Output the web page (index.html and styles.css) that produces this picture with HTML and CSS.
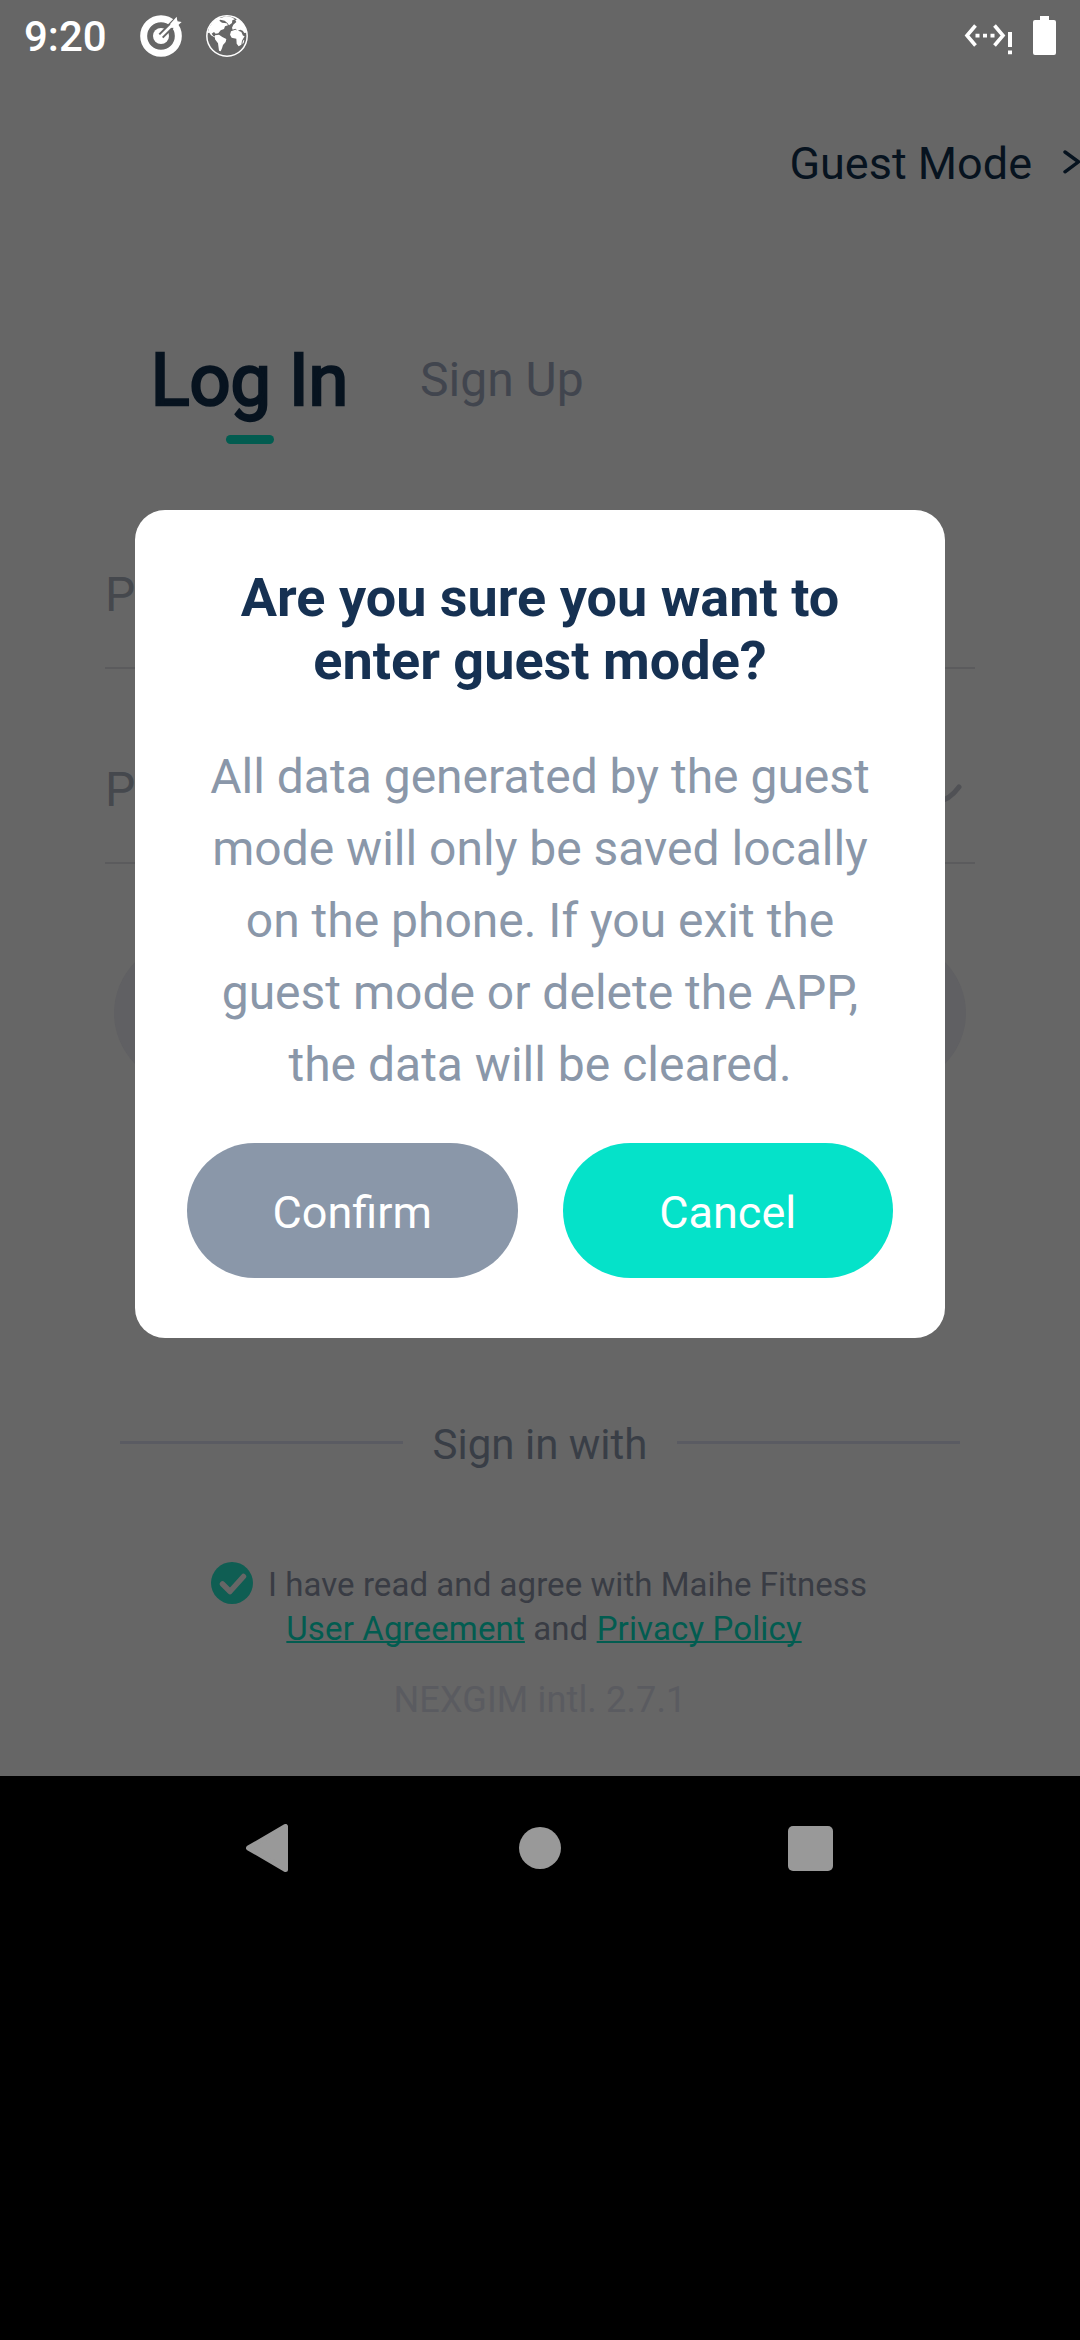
FILE: index.html
```html
<!DOCTYPE html>
<html lang="en">
<head>
<meta charset="utf-8">
<title>Log In</title>
<link rel="stylesheet" href="styles.css">
</head>
<body>
<div class="phone">
  <main class="screen">
    <header class="status">
      <span class="clock">9:20</span>
      <svg class="status-target" viewBox="420 45 126 126" width="42" height="42">
        <circle cx="483" cy="108" r="52" fill="none" stroke="#fff" stroke-width="21"/>
        <circle cx="483" cy="108" r="24" fill="#fff"/>
        <path d="M483 108L540 51" stroke="#666" stroke-width="20"/>
        <path d="M483 108L528 63" stroke="#fff" stroke-width="8" stroke-linecap="round"/>
        <path d="M511 71l19-21 2 14 13 2-20 18-12-1z" fill="#fff"/>
      </svg>
      <svg class="status-globe" viewBox="618 45 126 126" width="42" height="42">
        <circle cx="681" cy="108" r="60.5" fill="none" stroke="#fff" stroke-width="4.5"/>
        <path fill="#fff" d="M623 99l5-17 12-18 16-11 9 2-7 7 8 6 14 2 4 6-9 3-3 8-10 4-7 9-8 1-5-5-7 5 5 7 10 3-3 3-14-8-5-8zM662 54l16-5 17 3 10 6-8 3-1 8-9 7-5-7-8-7-13-3zM645 106l12-2 10 7 12 6-2 9-8 9-3 10-4 9-5-2-3-22-9-12zM696 83l4-9 9-8-3-5 6-4 13 10 11 15 4 16-7 1-5-7-7-3-8 3-7-6-8 3zM693 94l13-5 11 4 7 3 5 11 5 1-8 14-2 12-8 5-6-8-1-15-14-3-5-9zM729 122l4-3-2 10-4 3z"/>
      </svg>
      <svg class="status-net" viewBox="0 0 50 34" width="50" height="34">
        <path d="M11.500 2.500L3 12.500l8.500 10M30.500 2.500l8.500 10-8.500 10" fill="none" stroke="#fff" stroke-width="3.600"/>
        <path d="M11.500 10.800h4v3.800h-4zM19 10.800h4v3.800h-4zM26.500 10.800h4v3.800h-4zM44 9h4v15h-4zM44 27.500h4v3.700h-4z" fill="#fff"/>
      </svg>
      <svg class="status-battery" viewBox="0 0 23 39" width="23" height="39">
        <path d="M7 0h9v4h5a2 2 0 0 1 2 2v31a2 2 0 0 1-2 2H2a2 2 0 0 1-2-2V6a2 2 0 0 1 2-2h5z" fill="#fff"/>
      </svg>
    </header>

    <div class="guest">
      <span>Guest Mode</span>
      <svg viewBox="0 0 19 26" width="19" height="26"><path d="M4 3l13.500 9.800L4 22.800" fill="none" stroke="#07131f" stroke-width="3.400" stroke-linecap="round"/></svg>
    </div>

    <nav class="tabs">
      <div class="tab tab-active">Log In<i class="tab-bar"></i></div>
      <div class="tab tab-idle">Sign Up</div>
    </nav>

    <form class="form">
      <div class="field"><span>P</span></div>
      <div class="field">
        <span>P</span>
        <svg class="eye" viewBox="0 0 48 24" width="48" height="24"><path d="M3 4Q24 32 45 4" fill="none" stroke="#505155" stroke-width="5" stroke-linecap="round"/></svg>
      </div>
      <div class="submit"></div>
    </form>

    <div class="divider"><i></i><span>Sign in with</span><i></i></div>

    <div class="terms">
      <svg class="check" viewBox="0 0 42 42" width="42" height="42"><circle cx="21" cy="21" r="21" fill="#0f5e53"/><path d="M11.500 22l7.500 7.500L32.500 14.500" fill="none" stroke="#666" stroke-width="5.500" stroke-linecap="round" stroke-linejoin="round"/></svg>
      <span class="agree">I have read and agree with Maihe Fitness</span>
    </div>
    <div class="links"><a>User Agreement</a> and <a>Privacy Policy</a></div>
    <div class="version">NEXGIM intl. 2.7.1</div>
  </main>

  <footer class="navbar">
    <svg viewBox="0 0 42 48" width="42" height="48"><path d="M39.500 2.500v43L2.500 24z" fill="#999" stroke="#999" stroke-width="5" stroke-linejoin="round"/></svg>
    <i class="home"></i>
    <i class="recent"></i>
  </footer>

  <section class="dialog">
    <h1>Are you sure you want to<br>enter guest mode?</h1>
    <p>All data generated by the guest<br>mode will only be saved locally<br>on the phone. If you exit the<br>guest mode or delete the APP,<br>the data will be cleared.</p>
    <div class="actions">
      <button class="btn btn-confirm">Confirm</button>
      <button class="btn btn-cancel">Cancel</button>
    </div>
  </section>
</div>
</body>
</html>
```
FILE: styles.css
```css
* { box-sizing: border-box; }
body { margin: 0; background: #000; font-family: Roboto, sans-serif; }
svg { display: block; flex: none; }
.phone { position: relative; width: 1080px; height: 2340px; overflow: hidden; background: #000; }
.screen { height: 1776px; background: #666; display: flex; flex-direction: column; }

.status { height: 72px; display: flex; align-items: flex-start; padding: 15px 24px 0 24px; color: #fff; }
.clock { width: 116px; font-size: 42px; font-weight: 500; line-height: 44px; }
.status-globe { margin-left: 24px; }
.status-net { margin: 8px 19px 0 auto; }
.status-battery { margin-top: 1px; }

.guest { height: 60px; margin-top: 62px; display: flex; align-items: center; justify-content: flex-end; gap: 29px; color: #07131f; font-size: 45px; line-height: 60px; }
.guest svg { margin-top: -4px; }

.tabs { height: 130px; margin-top: 140px; padding-left: 150px; display: flex; align-items: flex-start; }
.tab-active { display: flex; flex-direction: column; align-items: center; width: 199px; padding-top: 1px; font-size: 72px; font-weight: 400; -webkit-text-stroke: 2.6px #07131f; line-height: 92px; white-space: nowrap; color: #07131f; }
.tab-bar { width: 48px; height: 9px; margin-top: 8px; border-radius: 5px; background: #025c50; }
.tab-idle { margin-left: 71px; padding-top: 1px; font-size: 48px; line-height: 90px; color: #41454e; }

.form { margin: 42px 105px 0; }
.field { height: 163px; display: flex; align-items: center; justify-content: space-between; padding: 16px 13px 0 0; border-bottom: 2px solid #5b5b5d; font-size: 48px; line-height: 56px; color: #45484d; }
.field + .field { margin-top: 32px; }
.eye { margin-top: 10px; }
.submit { height: 144px; margin: 77px 9px 0; border-radius: 72px; background: #606063; }

.divider { margin: 329px 120px 0; height: 56px; display: flex; align-items: center; justify-content: space-between; font-size: 42px; color: #393e46; }
.divider i { width: 283px; height: 3px; background: #5a5b62; }
.divider span { padding-top: 4px; }

.terms { height: 44px; margin: 91px 0 0 211px; display: flex; align-items: center; font-size: 33px; line-height: 44px; color: #393c44; }
.agree { margin-left: 15px; padding-top: 4px; letter-spacing: 0.06px; white-space: nowrap; }
.links { height: 44px; padding: 2px 0 0 8px; text-align: center; font-size: 33px; line-height: 44px; letter-spacing: 0.13px; color: #393c44; }
.links a { color: #025c50; text-decoration: underline; text-decoration-thickness: 2px; text-decoration-skip-ink: none; }
.version { margin-top: 27px; text-align: center; font-size: 36px; line-height: 48px; letter-spacing: 0.15px; color: #5a5b60; }

.navbar { height: 144px; padding: 0 247px 0 246px; display: flex; align-items: center; justify-content: space-between; }
.home { width: 42px; height: 42px; margin-left: 3px; border-radius: 50%; background: #999; }
.recent { width: 45px; height: 45px; border-radius: 5px; background: #999; }

.dialog { position: absolute; left: 135px; top: 510px; width: 810px; height: 828px; padding: 56px 52px 0; border-radius: 30px; background: #fff; text-align: center; }
.dialog h1 { margin: 0; font-size: 54px; font-weight: 700; line-height: 63px; color: #163152; }
.dialog p { margin: 49px 0 0; font-size: 48px; line-height: 72px; color: #8a97a9; }
.actions { margin-top: 42px; display: flex; gap: 45px; }
.btn { flex: 1; height: 135px; padding: 4px 0 0; border: 0; border-radius: 68px; font: 400 45px/60px Roboto, sans-serif; color: #fff; }
.btn-confirm { background: #8a97a9; }
.btn-cancel { background: #05e2c9; }
```
